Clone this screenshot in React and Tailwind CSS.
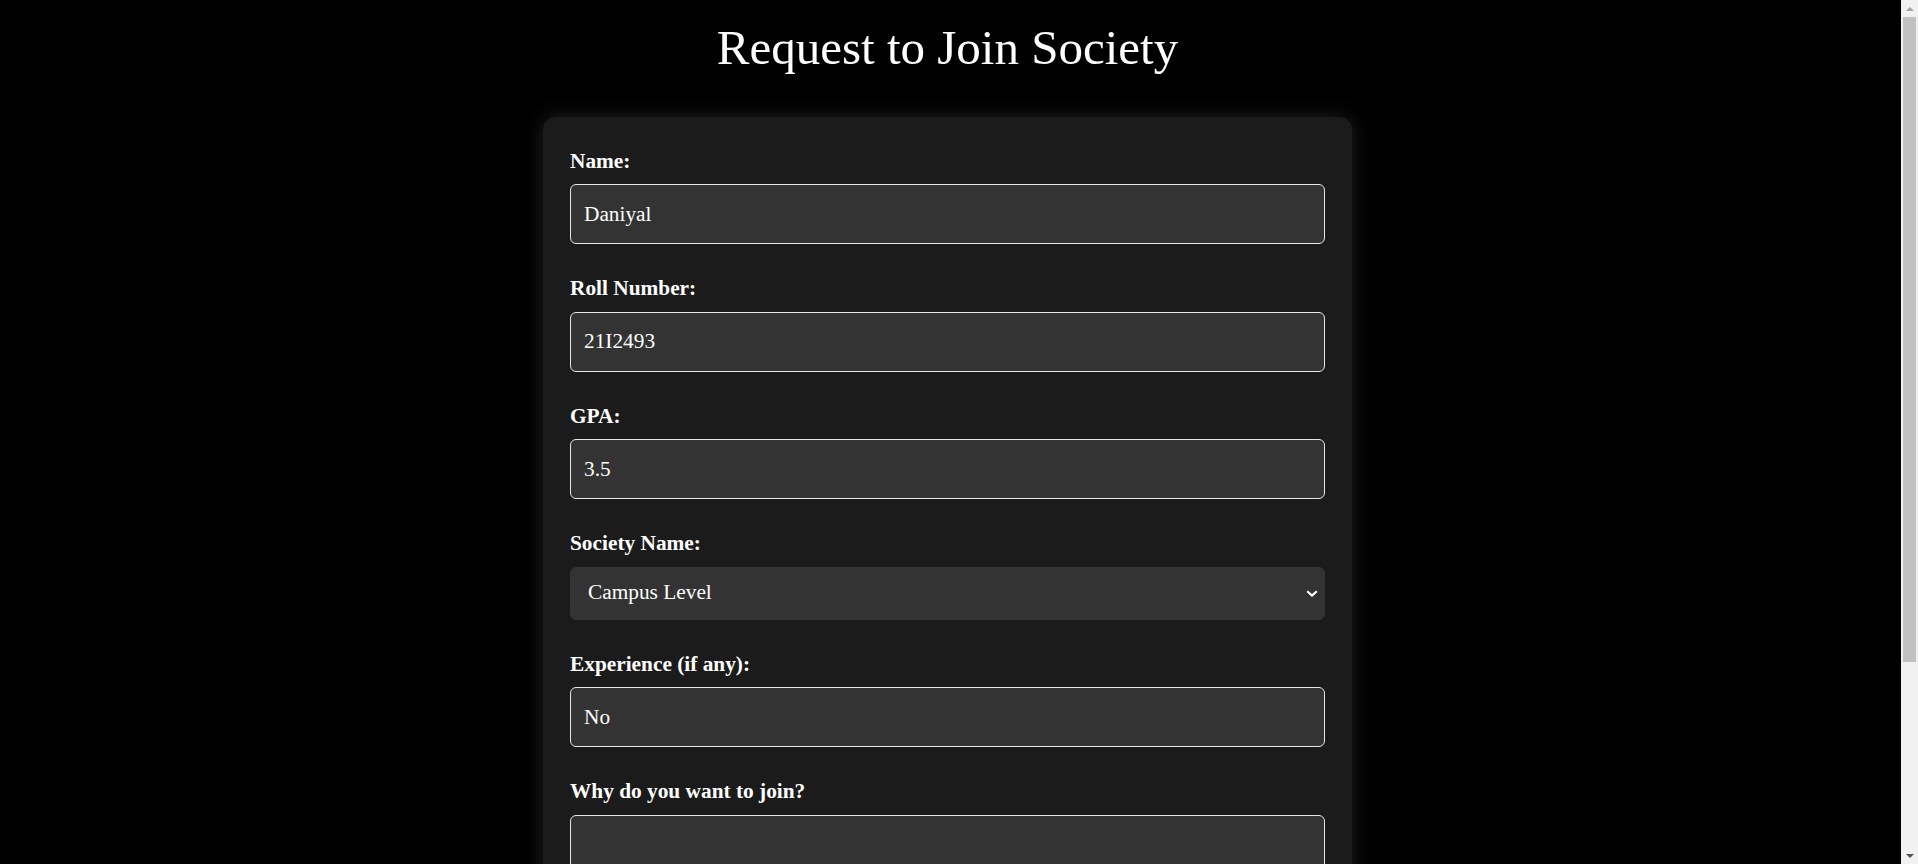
import React, { useState } from 'react';

// ---------------------------------------------------------------------------
// Form field pieces
// ---------------------------------------------------------------------------

function Label({ htmlFor, children }) {
  return (
    <label
      htmlFor={htmlFor}
      className="block text-[21.33px] leading-[24.5px] font-bold text-white"
    >
      {children}
    </label>
  );
}

function TextField({ id, label, value, onChange }) {
  return (
    <div className="mb-[32px] flex flex-col gap-[11px]">
      <Label htmlFor={id}>{label}</Label>
      <input
        id={id}
        type="text"
        value={value}
        onChange={(e) => onChange(e.target.value)}
        className="h-[60px] w-full rounded-[6px] border border-[#e6e6e6] bg-[#333333] px-[13px] text-[21.33px] text-white outline-none"
      />
    </div>
  );
}

function SelectField({ id, label, value, onChange, options }) {
  return (
    <div className="mb-[32px] flex flex-col gap-[11px]">
      <Label htmlFor={id}>{label}</Label>
      <div className="relative">
        <select
          id={id}
          value={value}
          onChange={(e) => onChange(e.target.value)}
          className="h-[53px] w-full appearance-none rounded-[6px] border border-[#333333] bg-[#333333] pl-[17px] text-[21.33px] text-white outline-none"
        >
          {options.map((o) => (
            <option key={o}>{o}</option>
          ))}
        </select>
        {/* chevron sits over the native select */}
        <svg
          viewBox="0 0 12 7"
          className="pointer-events-none absolute right-[7px] top-[23px] h-[7px] w-[12px]"
          aria-hidden="true"
        >
          <path d="M1.2 1.2L6 5.6L10.8 1.2" fill="none" stroke="white" strokeWidth="2.2" />
        </svg>
      </div>
    </div>
  );
}

// Classic window scrollbar drawn over the right edge, as the capture shows it.
function FakeScrollbar() {
  return (
    <div className="fixed right-0 top-0 flex h-screen w-[17px] flex-col bg-[#f1f1f1]">
      <div className="flex h-[17px] items-center justify-center">
        <svg viewBox="0 0 8 4" className="h-[4px] w-[8px]" aria-hidden="true">
          <path d="M0 4L4 0L8 4Z" fill="#a3a3a3" />
        </svg>
      </div>
      <div className="mx-[2px] h-[645px] bg-[#c1c1c1]" />
      <div className="flex-1" />
      <div className="flex h-[17px] items-center justify-center">
        <svg viewBox="0 0 8 4" className="h-[4px] w-[8px]" aria-hidden="true">
          <path d="M0 0L8 0L4 4Z" fill="#505050" />
        </svg>
      </div>
    </div>
  );
}

// ---------------------------------------------------------------------------
// App
// ---------------------------------------------------------------------------

export default function App() {
  const [form, setForm] = useState({
    name: 'Daniyal',
    roll: '21I2493',
    gpa: '3.5',
    society: 'Campus Level',
    experience: 'No',
    reason: '',
  });

  const set = (key) => (v) => setForm((f) => ({ ...f, [key]: v }));

  return (
    <div className="min-h-screen bg-black pr-[23px] pb-[52px] font-['Liberation_Serif','Times_New_Roman',serif] text-white">
      <h1 className="pt-[19.5px] text-center text-[49px] leading-[55px] font-normal">
        Request to Join Society
      </h1>

      <form
        className="mx-auto mt-[42.5px] w-[809px] rounded-[13px] bg-[#1b1b1b] px-[27px] pt-[31.5px] pb-[27px] shadow-[0_0_20px_rgba(255,255,255,0.13)]"
        onSubmit={(e) => e.preventDefault()}
      >
        <TextField id="name" label="Name:" value={form.name} onChange={set('name')} />
        <TextField id="roll" label="Roll Number:" value={form.roll} onChange={set('roll')} />
        <TextField id="gpa" label="GPA:" value={form.gpa} onChange={set('gpa')} />
        <SelectField
          id="society"
          label="Society Name:"
          value={form.society}
          onChange={set('society')}
          options={['Campus Level', 'National Level', 'International Level']}
        />
        <TextField
          id="experience"
          label="Experience (if any):"
          value={form.experience}
          onChange={set('experience')}
        />

        <div className="mb-[32px] flex flex-col gap-[11px]">
          <Label htmlFor="reason">Why do you want to join?</Label>
          <textarea
            id="reason"
            value={form.reason}
            onChange={(e) => set('reason')(e.target.value)}
            className="h-[133px] w-full resize-y rounded-[6px] border border-[#e6e6e6] bg-[#333333] px-[13px] py-[16px] text-[21.33px] text-white outline-none"
          />
        </div>

        <button
          type="submit"
          className="h-[53px] w-full rounded-[6px] bg-[#4caf50] text-[21.33px] text-white"
        >
          Submit Request
        </button>
      </form>

      <FakeScrollbar />
    </div>
  );
}
